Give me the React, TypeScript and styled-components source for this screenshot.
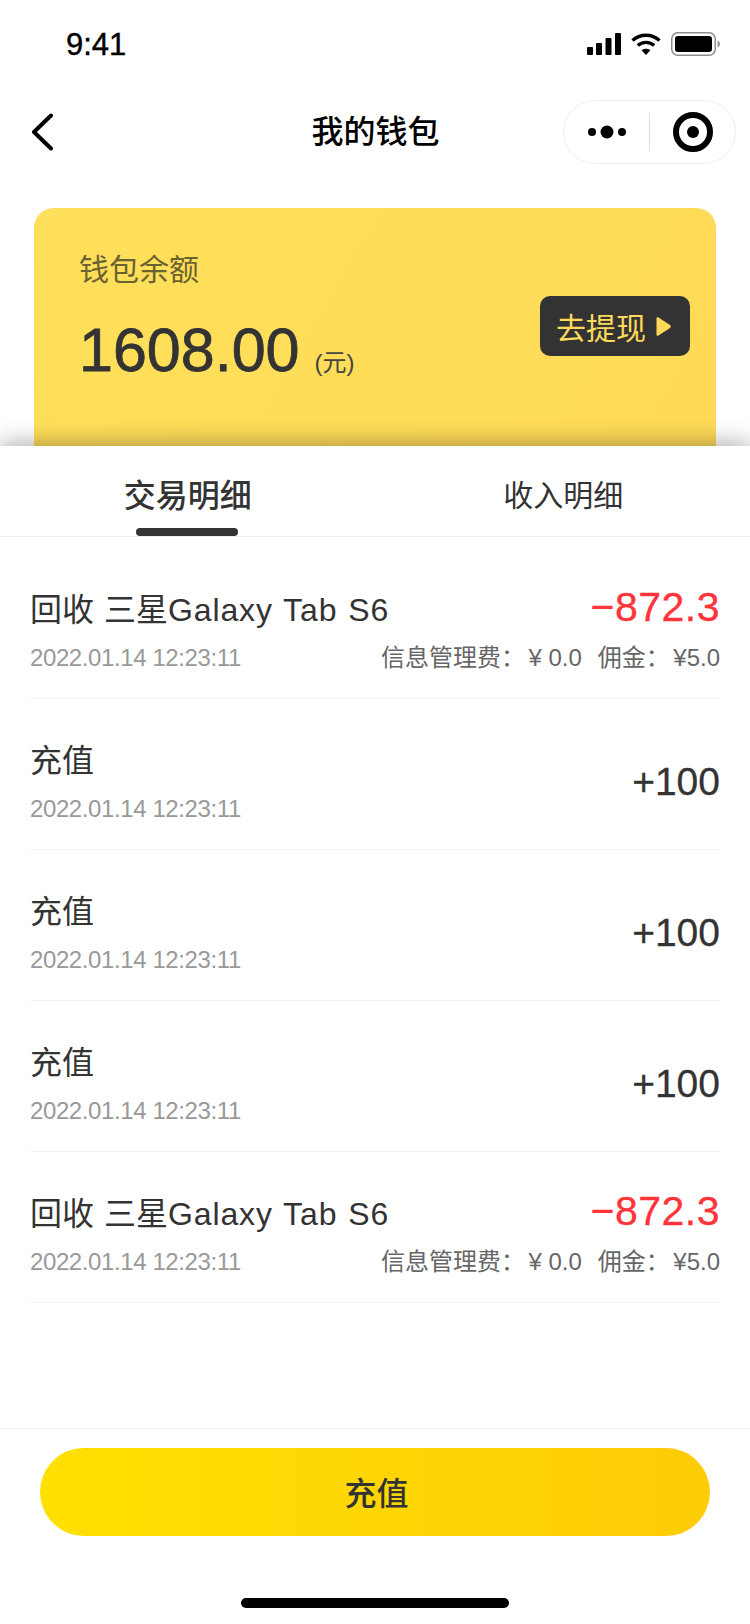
import React from "react";
import styled, { createGlobalStyle } from "styled-components";

const Global = createGlobalStyle`
  html, body { margin: 0; padding: 0; background: #fff; }
  * { box-sizing: border-box; }
  body { font-family: "Liberation Sans", "Noto Sans CJK SC", sans-serif; color: #333; }
`;

const Page = styled.div`
  width: 750px;
  height: 1624px;
  display: flex;
  flex-direction: column;
  background: #fff;
  overflow: hidden;
`;

const StatusBar = styled.div`
  height: 88px;
  flex: none;
  display: flex;
  align-items: flex-start;
  justify-content: space-between;
  padding: 28px 30px 0 66px;
`;

const Time = styled.div`
  font-size: 31px;
  line-height: 34px;
  color: #000;
  -webkit-text-stroke: 0.4px #000;
`;

const StatusIcons = styled.div`
  display: flex;
  align-items: center;
  gap: 10px;
  height: 24px;
  margin-top: 4px;
`;

const NavBar = styled.div`
  height: 88px;
  flex: none;
  display: flex;
  align-items: center;
  justify-content: space-between;
  padding: 0 14px 0 30px;
  position: relative;
`;

const Title = styled.div`
  position: absolute;
  left: 1px;
  right: 0;
  text-align: center;
  font-size: 32px;
  line-height: 44px;
  font-weight: 500;
  color: #000;
`;

const Capsule = styled.div`
  width: 173px;
  height: 64px;
  border: 1px solid #eee;
  border-radius: 32px;
  display: flex;
  align-items: center;
  background: #fff;
`;

const CapsuleSlot = styled.div`
  flex: 1;
  display: flex;
  align-items: center;
  justify-content: center;
`;

const CapsuleDivider = styled.div`
  width: 1px;
  height: 38px;
  background: #ddd;
`;

const Top = styled.div`
  height: 270px;
  flex: none;
  padding: 32px 34px 0;
`;

const Card = styled.div`
  height: 238px;
  border-radius: 20px 20px 0 0;
  background: linear-gradient(120deg, #ffe05a 0%, #ffda58 100%);
  padding: 46px 26px 0 45px;
  display: flex;
  justify-content: space-between;
`;

const Balance = styled.div`
  display: flex;
  flex-direction: column;
`;

const BalanceLabel = styled.div`
  font-size: 30px;
  line-height: 32px;
  color: #6b6232;
`;

const BalanceRow = styled.div`
  display: flex;
  align-items: baseline;
  margin-top: 28px;
`;

const Amount = styled.div`
  font-size: 61px;
  line-height: 72px;
  color: #333;
  -webkit-text-stroke: 0.8px #333;
`;

const Unit = styled.div`
  font-size: 24px;
  margin-left: 15px;
  color: #444;
`;

const Withdraw = styled.div`
  width: 150px;
  height: 60px;
  margin-top: 42px;
  border-radius: 10px;
  background: #333;
  color: #ffd95a;
  font-size: 30px;
  display: flex;
  align-items: center;
  padding-left: 16px;
  gap: 10px;
`;

const Panel = styled.div`
  flex: 1;
  position: relative;
  background: #fff;
  box-shadow: 0 -3px 22px rgba(0, 0, 0, 0.32);
  display: flex;
  flex-direction: column;
`;

const Tabs = styled.div`
  height: 91px;
  flex: none;
  display: flex;
  border-bottom: 1px solid #eee;
`;

const Tab = styled.div<{ $active?: boolean }>`
  flex: 1;
  display: flex;
  flex-direction: column;
  align-items: center;
  padding: 27px 0 0 ${(p) => (p.$active ? "1px" : "2px")};
  position: relative;
  font-size: ${(p) => (p.$active ? "32px" : "30px")};
  font-weight: ${(p) => (p.$active ? 500 : 400)};
  line-height: 46px;
  color: #333;
`;

const TabMark = styled.div`
  position: absolute;
  bottom: 0;
  left: 136px;
  width: 102px;
  height: 8px;
  border-radius: 4px;
  background: #333;
`;

const List = styled.div`
  flex: 1;
  padding: 11px 30px 0;
`;

const Row = styled.div`
  height: 151px;
  border-bottom: 1px solid #f2f2f2;
  display: flex;
  justify-content: space-between;
  align-items: stretch;
`;

const RowLeft = styled.div`
  flex: 0 0 300px;
  min-width: 0;
  display: flex;
  flex-direction: column;
  padding-top: 40px;
`;

const RowTitle = styled.div`
  font-size: 32px;
  line-height: 44px;
  word-spacing: 1px;
  white-space: nowrap;
  color: #333;
`;

const Latin = styled.span`
  letter-spacing: 0.9px;
`;

const RowDate = styled.div`
  font-size: 24px;
  line-height: 34px;
  margin-top: 9px;
  letter-spacing: -0.4px;
  white-space: nowrap;
  color: #999;
`;

const RowRight = styled.div<{ $center?: boolean }>`
  flex: none;
  display: flex;
  flex-direction: column;
  align-items: flex-end;
  padding-top: ${(p) => (p.$center ? "61px" : "37px")};
`;

const Money = styled.div<{ $negative?: boolean }>`
  font-size: ${(p) => (p.$negative ? "41px" : "39px")};
  line-height: 44px;
  letter-spacing: ${(p) => (p.$negative ? "0.5px" : "0")};
  -webkit-text-stroke: 0.3px currentColor;
  color: ${(p) => (p.$negative ? "#ff333a" : "#333")};
`;

const Fee = styled.div`
  font-size: 24px;
  line-height: 34px;
  margin-top: 12px;
  color: #666;
  display: flex;
  gap: 16px;
  white-space: nowrap;
`;

const FeeLabel = styled.span`
  margin-right: 3.5px;
`;

const Footer = styled.div`
  height: 196px;
  flex: none;
  border-top: 1px solid #f0f0f0;
  padding: 19px 40px 0;
  display: flex;
  flex-direction: column;
  align-items: center;
`;

const ChargeButton = styled.div`
  width: 670px;
  height: 88px;
  border-radius: 44px;
  background: linear-gradient(90deg, #ffe000 0%, #ffcc08 100%);
  display: flex;
  align-items: center;
  justify-content: center;
  padding: 0 0 3px 3px;
  font-size: 32px;
  font-weight: 500;
  color: #333;
`;

const HomeBar = styled.div`
  width: 268px;
  height: 10px;
  border-radius: 5px;
  background: #000;
  margin-top: 62px;
`;

const SignalIcon = () => (
  <svg width="34" height="22" viewBox="0 0 34 22">
    <rect x="0" y="14" width="6" height="8" rx="1" fill="#000" />
    <rect x="9" y="10" width="6" height="12" rx="1" fill="#000" />
    <rect x="18.5" y="5" width="6" height="17" rx="1" fill="#000" />
    <rect x="28" y="0" width="6" height="22" rx="1" fill="#000" />
  </svg>
);

const WifiIcon = () => (
  <svg width="30" height="22" viewBox="0 0 30 22" fill="none" stroke="#000" strokeWidth="3.4">
    <path d="M1.5 7.5 C9 0.5 21 0.5 28.5 7.5" />
    <path d="M6.8 12.6 C11.5 8.3 18.5 8.3 23.2 12.6" />
    <path d="M15 22 L10.6 17.3 C13 15.3 17 15.3 19.4 17.3 Z" fill="#000" stroke="none" />
  </svg>
);

const BatteryIcon = () => (
  <svg width="49" height="24" viewBox="0 0 49 24">
    <rect x="0.75" y="0.75" width="43.5" height="22.5" rx="6" fill="none" stroke="#8e8e8e" strokeWidth="1.5" />
    <rect x="4" y="4" width="37" height="16" rx="3" fill="#000" />
    <path d="M46.5 8.5 C48 9 49 10.3 49 12 C49 13.7 48 15 46.5 15.5 Z" fill="#9a9a9a" />
  </svg>
);

const BackIcon = () => (
  <svg width="24" height="38" viewBox="0 0 24 38" fill="none" stroke="#000" strokeWidth="4" strokeLinecap="round" strokeLinejoin="round">
    <path d="M21 2.5 L4 19 L21 35.5" />
  </svg>
);

const DotsIcon = () => (
  <svg width="38" height="14" viewBox="0 0 38 14" fill="#000">
    <circle cx="4" cy="7" r="4" />
    <circle cx="19" cy="7" r="6.5" />
    <circle cx="34" cy="7" r="4" />
  </svg>
);

const TargetIcon = () => (
  <svg width="40" height="40" viewBox="0 0 40 40">
    <circle cx="20" cy="20" r="17" fill="none" stroke="#000" strokeWidth="6" />
    <circle cx="20" cy="20" r="6" fill="#000" />
  </svg>
);

const PlayIcon = () => (
  <svg width="15" height="19" viewBox="0 0 15 19">
    <path d="M0.5 1.5 C0.5 0.4 1.6 -0.2 2.5 0.5 L14 8.1 C15 8.8 15 10.2 14 10.9 L2.5 18.5 C1.6 19.2 0.5 18.6 0.5 17.5 Z" fill="#ffd95a" />
  </svg>
);

type Item = { cjk: string; latin?: string; money: string; negative?: boolean };

const items: Item[] = [
  { cjk: "回收 三星", latin: "Galaxy Tab S6", money: "−872.3", negative: true },
  { cjk: "充值", money: "+100" },
  { cjk: "充值", money: "+100" },
  { cjk: "充值", money: "+100" },
  { cjk: "回收 三星", latin: "Galaxy Tab S6", money: "−872.3", negative: true },
];

export default function App() {
  return (
    <Page>
      <Global />
      <StatusBar>
        <Time>9:41</Time>
        <StatusIcons>
          <SignalIcon />
          <WifiIcon />
          <BatteryIcon />
        </StatusIcons>
      </StatusBar>
      <NavBar>
        <BackIcon />
        <Title>我的钱包</Title>
        <Capsule>
          <CapsuleSlot>
            <DotsIcon />
          </CapsuleSlot>
          <CapsuleDivider />
          <CapsuleSlot>
            <TargetIcon />
          </CapsuleSlot>
        </Capsule>
      </NavBar>
      <Top>
        <Card>
          <Balance>
            <BalanceLabel>钱包余额</BalanceLabel>
            <BalanceRow>
              <Amount>1608.00</Amount>
              <Unit>(元)</Unit>
            </BalanceRow>
          </Balance>
          <Withdraw>
            去提现
            <PlayIcon />
          </Withdraw>
        </Card>
      </Top>
      <Panel>
        <Tabs>
          <Tab $active>
            交易明细
            <TabMark />
          </Tab>
          <Tab>收入明细</Tab>
        </Tabs>
        <List>
          {items.map((item, i) => (
            <Row key={i}>
              <RowLeft>
                <RowTitle>
                  {item.cjk}
                  {item.latin && <Latin>{item.latin}</Latin>}
                </RowTitle>
                <RowDate>2022.01.14 12:23:11</RowDate>
              </RowLeft>
              <RowRight $center={!item.negative}>
                <Money $negative={item.negative}>{item.money}</Money>
                {item.negative && (
                  <Fee>
                    <span>
                      <FeeLabel>信息管理费：</FeeLabel>¥ 0.0
                    </span>
                    <span>
                      <FeeLabel>佣金：</FeeLabel>¥5.0
                    </span>
                  </Fee>
                )}
              </RowRight>
            </Row>
          ))}
        </List>
        <Footer>
          <ChargeButton>充值</ChargeButton>
          <HomeBar />
        </Footer>
      </Panel>
    </Page>
  );
}
